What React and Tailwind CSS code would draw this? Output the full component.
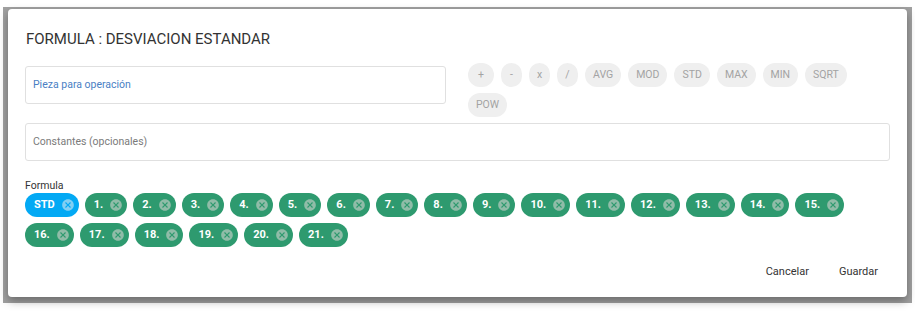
import React from 'react';

const operators = ['+', '-', 'x', '/', 'AVG', 'MOD', 'STD', 'MAX', 'MIN', 'SQRT', 'POW'];
const pieces = Array.from({ length: 21 }, (_, i) => `${i + 1}.`);

const CancelIcon = ({ fill }) => (
    <svg viewBox="0 0 24 24" className="w-[14px] h-[14px] shrink-0" fill={fill}>
        <path d="M12 2C6.47 2 2 6.47 2 12s4.47 10 10 10 10-4.47 10-10S17.53 2 12 2zm5 13.59L15.59 17 12 13.41 8.41 17 7 15.59 10.59 12 7 8.41 8.41 7 12 10.59 15.59 7 17 8.41 13.41 12 17 15.59z" />
    </svg>
);

const FormulaChip = ({ label, blue }) => (
    <div
        className={`h-[24px] rounded-full flex items-center pl-[9px] pr-[4px] gap-[6px] text-white font-bold text-[11px] ${
            blue ? 'bg-[#03a9f4]' : 'bg-[#2e9a6f]'
        }`}
    >
        <span>{label}</span>
        <CancelIcon fill={blue ? '#81cff3' : '#90bca8'} />
    </div>
);

const App = () => {
    return (
        <div
            className="w-[915px] h-[312px] bg-white pl-[3px] pt-[7px] overflow-hidden"
            style={{ fontFamily: 'Roboto, "Liberation Sans", sans-serif' }}
        >
            <div className="w-[909px] h-[296px] bg-[#a1a1a1] pl-[5px] pt-[2px]">
                <div className="w-[899px] h-[288px] bg-white rounded-[4px] shadow-[0_4px_10px_rgba(0,0,0,0.35)] flex flex-col">
                    <div className="px-[17px] pt-[20px]">
                        {/* Title */}
                        <h2 className="text-[15px] leading-[20px] text-[#333333] ml-[1px]">
                            FORMULA : DESVIACION ESTANDAR
                        </h2>

                        {/* Pieza + operadores */}
                        <div className="flex items-start mt-[14px]">
                            <div className="mt-[3px] w-[421px] h-[38px] border border-[#e0e0e0] rounded-[3px] flex items-center px-[7px]">
                                <span className="text-[10.5px] text-[#4a80c4]">Pieza para operación</span>
                            </div>
                            <div className="ml-[22px] w-[400px] flex flex-wrap gap-x-[7px] gap-y-[6px]">
                                {operators.map((op) => (
                                    <div
                                        key={op}
                                        className={`h-[24px] rounded-full bg-[#efefef] text-[#a3a3a3] text-[10.5px] flex items-center justify-center ${
                                            op === '+' ? 'w-[26px]' : op.length === 1 ? 'w-[21px]' : 'px-[8px]'
                                        }`}
                                    >
                                        {op}
                                    </div>
                                ))}
                            </div>
                        </div>

                        {/* Constantes */}
                        <div className="mt-[6px] w-[865px] h-[38px] border border-[#e0e0e0] rounded-[3px] flex items-center px-[7px]">
                            <span className="text-[10.5px] text-[#7a7a7a]">Constantes (opcionales)</span>
                        </div>

                        {/* Formula */}
                        <div className="mt-[18px] text-[10.5px] leading-[13px] text-[#333333]">Formula</div>
                        <div className="mt-[1px] w-[865px] flex flex-wrap gap-x-[6px] gap-y-[6px]">
                            <FormulaChip label="STD" blue />
                            {pieces.map((p) => (
                                <FormulaChip key={p} label={p} />
                            ))}
                        </div>
                    </div>

                    {/* Actions */}
                    <div className="mt-auto flex justify-end pr-[14px] pb-[10px]">
                        <button type="button" className="h-[30px] px-[15px] text-[11px] text-[#333333]">
                            Cancelar
                        </button>
                        <button type="button" className="h-[30px] px-[15px] text-[11px] text-[#333333]">
                            Guardar
                        </button>
                    </div>
                </div>
            </div>
        </div>
    );
};

export default App;
